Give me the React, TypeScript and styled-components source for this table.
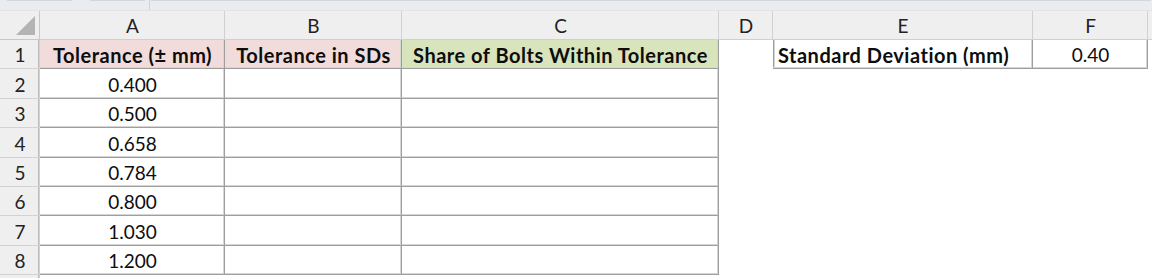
import * as React from "react";
import styled, { createGlobalStyle } from "styled-components";

const GlobalStyle = createGlobalStyle`
  html, body {
    margin: 0;
    padding: 0;
    background: #ffffff;
  }
  body {
    font-family: Lato, "Open Sans", "Liberation Sans", sans-serif;
    overflow: hidden;
  }
`;

const COLUMNS = ["A", "B", "C", "D", "E", "F"];
const ROW_HEIGHTS = [29, 30, 29, 30, 29, 29, 30, 29, 29];
const TOLERANCES = ["0.400", "0.500", "0.658", "0.784", "0.800", "1.030", "1.200"];

const Page = styled.div`
  width: 1152px;
  height: 278px;
  overflow: hidden;
  display: flex;
  flex-direction: column;
`;

const FormulaStrip = styled.div`
  height: 11px;
  flex: none;
  display: flex;
  align-items: flex-start;
  background: #e9edf1;
  border-bottom: 1px solid #e3e3e3;
  box-sizing: border-box;
`;

const StripBox = styled.div<{ $w: string; $ml: number }>`
  width: ${(p) => p.$w};
  margin-left: ${(p) => p.$ml}px;
  height: 1px;
  background: #d3d6da;
`;

const StripDivider = styled.div`
  width: 1px;
  height: 10px;
  margin-left: 4px;
  background: #cfd2d6;
`;

const Grid = styled.div`
  display: grid;
  grid-template-columns: 40px 185px 177px 317px 54px 260px 115px 1fr;
  grid-template-rows: 29px ${ROW_HEIGHTS.map((h) => `${h}px`).join(" ")};
`;

const Corner = styled.div`
  position: relative;
  background: #efefef;
  box-shadow: inset -1px -1px 0 #c8c8c8;
`;

const CornerTriangle = styled.div`
  position: absolute;
  right: 5px;
  bottom: 5px;
  width: 0;
  height: 0;
  border-left: 19px solid transparent;
  border-bottom: 19px solid #b4b4b4;
`;

const ColHeader = styled.div`
  background: #efefef;
  box-shadow: inset -1px -1px 0 #d0d0d0;
  display: flex;
  align-items: center;
  justify-content: center;
  font-size: 19px;
  color: #222;
`;

const RowHeader = styled.div`
  background: #efefef;
  box-shadow: inset -1px -1px 0 #d2d2d2, inset -2px 0 0 #bcbcbc;
  display: flex;
  align-items: center;
  justify-content: center;
  font-size: 19px;
  color: #222;
`;

const Cell = styled.div<{
  $fill?: string;
  $align?: "left" | "center";
  $bold?: boolean;
  $boxed?: boolean;
  $edgeLeft?: boolean;
}>`
  background: ${(p) => p.$fill || "#ffffff"};
  display: flex;
  align-items: center;
  justify-content: ${(p) => (p.$align === "left" ? "flex-start" : "center")};
  padding: 0 5px;
  font-size: ${(p) => (p.$bold ? "20px" : "19px")};
  letter-spacing: ${(p) => (p.$bold ? "0.5px" : "0")};
  font-weight: ${(p) => (p.$bold ? 700 : 400)};
  color: #0d0d0d;
  white-space: nowrap;
  overflow: hidden;
  box-shadow: ${(p) =>
    p.$boxed
      ? `inset -1px -1px 0 #9e9e9e, inset -2px -2px 0 #d6d6d6${
          p.$edgeLeft ? ", inset 1px 0 0 #9e9e9e, inset 2px 0 0 #d6d6d6" : ""
        }`
      : "none"};
`;

const App: React.FunctionComponent = () => {
  return (
    <Page>
      <GlobalStyle />
      <FormulaStrip>
        <StripBox $w="65px" $ml={7} />
        <StripBox $w="55px" $ml={18} />
        <StripDivider />
        <StripBox $w="1000px" $ml={1} />
      </FormulaStrip>
      <Grid>
        <Corner>
          <CornerTriangle />
        </Corner>
        {COLUMNS.map((c) => (
          <ColHeader key={c}>{c}</ColHeader>
        ))}
        <ColHeader />

        <RowHeader>1</RowHeader>
        <Cell $fill="#f2dcdb" $bold $boxed>
          Tolerance (± mm)
        </Cell>
        <Cell $fill="#f2dcdb" $bold $boxed>
          Tolerance in SDs
        </Cell>
        <Cell $fill="#d8e4bc" $bold $boxed>
          Share of Bolts Within Tolerance
        </Cell>
        <Cell />
        <Cell $align="left" $bold $boxed $edgeLeft>
          Standard Deviation (mm)
        </Cell>
        <Cell $boxed>0.40</Cell>
        <Cell />

        {TOLERANCES.map((t, i) => (
          <React.Fragment key={t}>
            <RowHeader>{i + 2}</RowHeader>
            <Cell $boxed>{t}</Cell>
            <Cell $boxed />
            <Cell $boxed />
            <Cell />
            <Cell />
            <Cell />
            <Cell />
          </React.Fragment>
        ))}

        <RowHeader />
      </Grid>
    </Page>
  );
};

export default App;
